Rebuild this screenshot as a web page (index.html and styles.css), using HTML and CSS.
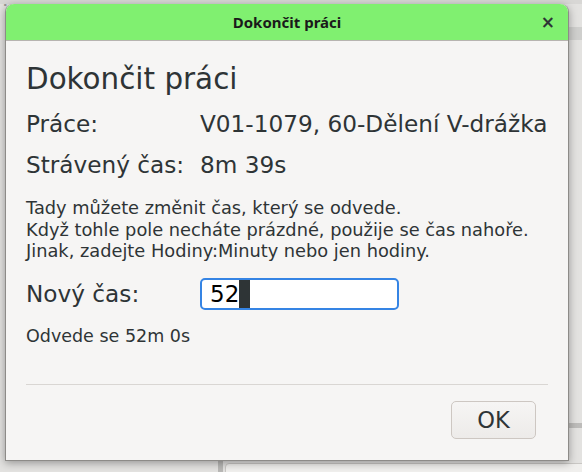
FILE: index.html
```html
<!DOCTYPE html>
<html lang="cs">
<head>
<meta charset="utf-8">
<title>Dokončit práci</title>
<link rel="stylesheet" href="styles.css">
</head>
<body>
<div class="desktop">
  <div class="bg-text">Im 3 1 0  00 - 00</div>
  <div class="bg-band-top"></div>
  <div class="bg-band-right"></div>
  <div class="bg-band-right2"></div>
  <div class="bg-bar"></div>
  <div class="bg-box"></div>

  <div class="dialog">
    <div class="titlebar">
      <span class="title">Dokončit práci</span>
      <span class="close">×</span>
    </div>
    <div class="content">
      <h1 class="heading">Dokončit práci</h1>
      <div class="grid">
        <div class="label">Práce:</div>
        <div class="value">V01-1079, 60-Dělení V-drážka</div>
        <div class="label">Strávený čas:</div>
        <div class="value">8m 39s</div>
      </div>
      <p class="help">Tady můžete změnit čas, který se odvede.<br>Když tohle pole necháte prázdné, použije se čas nahoře.<br>Jinak, zadejte Hodiny:Minuty nebo jen hodiny.</p>
      <div class="grid entry-row">
        <div class="label">Nový čas:</div>
        <div class="entry"><span class="entry-text">52</span><span class="cursor"></span></div>
      </div>
      <p class="result">Odvede se 52m 0s</p>
      <div class="separator"></div>
      <div class="actions">
        <button class="ok">OK</button>
      </div>
    </div>
  </div>
</div>
</body>
</html>
```
FILE: styles.css
```css
html, body {
  margin: 0;
  padding: 0;
}
body {
  width: 582px;
  height: 472px;
  overflow: hidden;
  background: #e3e2e0;
  font-family: "DejaVu Sans", sans-serif;
  color: #2e3436;
}
.desktop {
  position: relative;
  width: 582px;
  height: 472px;
}
.bg-text {
  position: absolute;
  left: 2px;
  top: -14px;
  font-size: 22px;
  color: #9a9a98;
  white-space: pre;
}
.bg-band-top {
  position: absolute;
  left: 0;
  top: 0;
  width: 582px;
  height: 4px;
  background: #d8d7d5;
}
.bg-band-right {
  position: absolute;
  left: 569px;
  top: 27px;
  width: 13px;
  height: 13px;
  background: #cfcfcd;
}
.bg-band-right2 {
  position: absolute;
  left: 569px;
  top: 423px;
  width: 13px;
  height: 5px;
  background: #bdbcba;
}
.bg-bar {
  position: absolute;
  left: 218px;
  top: 458px;
  width: 5px;
  height: 14px;
  background: #b9b8b6;
}
.bg-box {
  position: absolute;
  left: 225px;
  top: 463px;
  width: 360px;
  height: 20px;
  background: #f0efed;
  border: 1px solid #c9c7c4;
  border-radius: 4px 0 0 0;
}
.dialog {
  position: absolute;
  left: 5px;
  top: 4px;
  width: 564px;
  height: 457px;
  box-sizing: border-box;
  background: #f6f5f4;
  border: 1px solid #8d8b88;
  border-top: none;
  border-radius: 8px 8px 0 0;
  box-shadow: 0 2px 8px rgba(0,0,0,0.35);
  display: flex;
  flex-direction: column;
}
.titlebar {
  height: 37px;
  flex: none;
  box-sizing: border-box;
  background: #80f070;
  border-bottom: 1px solid #b7b4b0;
  border-radius: 8px 8px 0 0;
  display: flex;
  align-items: center;
  justify-content: center;
  position: relative;
}
.title {
  font-family: "Noto Sans", sans-serif;
  font-weight: bold;
  font-size: 15px;
  color: #1a1a1a;
}
.close {
  position: absolute;
  right: 13px;
  top: 8px;
  font-size: 17px;
  font-weight: bold;
  color: #2e3436;
}
.content {
  flex: 1;
  padding: 20px 20px 20px 20px;
  display: flex;
  flex-direction: column;
}
.heading {
  margin: 0;
  font-size: 29.4px;
  font-weight: normal;
  line-height: 36px;
}
.grid {
  display: grid;
  grid-template-columns: 174px 1fr;
  row-gap: 13px;
  margin-top: 13px;
  font-size: 23.2px;
  line-height: 28px;
}
.help {
  margin: 18px 0 0 0;
  font-size: 17.8px;
  line-height: 21.7px;
}
.entry-row {
  margin-top: 16px;
  align-items: center;
}
.entry {
  width: 199px;
  height: 32px;
  box-sizing: border-box;
  background: #ffffff;
  border: 2px solid #3584e4;
  border-radius: 5px;
  display: flex;
  align-items: center;
  padding-left: 8px;
  font-size: 23px;
  color: #000;
}
.cursor {
  width: 11px;
  height: 28px;
  background: #2e3436;
}
.result {
  margin: 16px 0 0 0;
  font-size: 17.5px;
  line-height: 21px;
}
.separator {
  margin-top: 37px;
  height: 1px;
  background: #d9d6d3;
}
.actions {
  margin-top: 16px;
  display: flex;
  justify-content: flex-end;
  padding-right: 12px;
}
.ok {
  width: 85px;
  height: 38px;
  font-family: "DejaVu Sans", sans-serif;
  font-size: 22.5px;
  color: #2e3436;
  background: linear-gradient(#f6f5f4, #edebe9);
  border: 1px solid #cdc7c2;
  border-radius: 5px;
  padding: 0;
}
```
